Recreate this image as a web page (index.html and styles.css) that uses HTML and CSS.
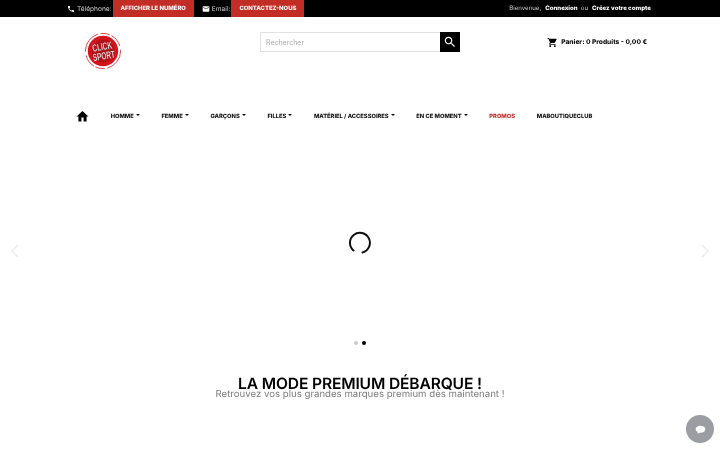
FILE: index.html
```html
<!DOCTYPE html>
<html lang="fr">
<head>
    <meta charset="UTF-8">
    <title>Click Sport</title>
    <link rel="stylesheet" href="styles.css">
</head>
<body>
    <!-- Top bar -->
    <div class="topbar">
        <div class="topbar-left">
            <svg class="top-icon" viewBox="0 0 24 24"><path d="M6.6 10.8c1.4 2.8 3.8 5.1 6.6 6.6l2.2-2.2c.3-.3.7-.4 1-.2 1.100.4 2.300.6 3.600.6.600 0 1 .4 1 1V20c0 .6-.4 1-1 1C10.600 21 3 13.400 3 4c0-.6.4-1 1-1h3.500c.6 0 1 .4 1 1 0 1.300.2 2.500.6 3.600.1.300 0 .7-.2 1z"/></svg>
            <span class="top-label">Téléphone:</span>
            <a class="top-btn">AFFICHER LE NUMÉRO</a>
            <svg class="top-icon mail-icon" viewBox="0 0 24 24"><path d="M20 4H4c-1.100 0-2 .9-2 2v12c0 1.100.9 2 2 2h16c1.100 0 2-.9 2-2V6c0-1.100-.9-2-2-2zm0 4l-8 5-8-5V6l8 5 8-5v2z"/></svg>
            <span class="top-label">Email:</span>
            <a class="top-btn">CONTACTEZ-NOUS</a>
        </div>
        <div class="topbar-right">
            <span>Bienvenue,</span>
            <b>Connexion</b>
            <span>ou</span>
            <b>Créez votre compte</b>
        </div>
    </div>

    <!-- Header -->
    <header class="header">
        <svg class="logo" viewBox="0 0 40 40">
            <circle cx="20" cy="20" r="18.500" fill="none" stroke="#d9232a" stroke-width="0.900" stroke-dasharray="24 3 10 2 14 4"/>
            <circle cx="20" cy="20" r="16" fill="#d3141d"/>
            <circle cx="20" cy="20" r="12" fill="#b50f18"/>
            <g class="logo-text" transform="rotate(-10 20 20) translate(20 0) scale(.62 1)">
                <text y="19">CLICK</text>
                <text y="29">SPORT</text>
            </g>
        </svg>
        <form class="search">
            <input class="search-input" type="text" placeholder="Rechercher">
            <button class="search-btn" type="button">
                <svg viewBox="0 0 24 24"><path d="M15.500 14h-.8l-.3-.3c1-1.100 1.600-2.600 1.600-4.200C16 5.900 13.100 3 9.500 3S3 5.900 3 9.500 5.900 16 9.500 16c1.600 0 3.100-.6 4.200-1.600l.3.3v.8l5 5 1.500-1.500-5-5zm-6 0C7 14 5 12 5 9.500S7 5 9.500 5 14 7 14 9.500 12 14 9.500 14z"/></svg>
            </button>
        </form>
        <div class="cart">
            <svg viewBox="0 0 24 24"><path d="M7 18c-1.100 0-2 .9-2 2s.9 2 2 2 2-.9 2-2-.9-2-2-2zM1 2v2h2l3.600 7.600L5.200 14c-.1.300-.2.600-.2 1 0 1.100.9 2 2 2h12v-2H7.400c-.1 0-.2-.1-.2-.2v-.1l.9-1.700h7.500c.7 0 1.400-.4 1.700-1l3.600-6.500c.1-.2.100-.3.100-.5 0-.6-.4-1-1-1H5.200l-.9-2H1zm16 16c-1.100 0-2 .9-2 2s.9 2 2 2 2-.9 2-2-.9-2-2-2z"/></svg>
            <span>Panier: 0 Produits - 0,00 €</span>
        </div>
    </header>

    <!-- Main menu -->
    <nav class="menu">
        <svg class="home-icon" viewBox="0 0 24 24"><path d="M10 21v-7h4v7h5.500v-9H23L12 2 1 12h3.500v9z"/></svg>
        <a class="menu-item caret">HOMME</a>
        <a class="menu-item caret">FEMME</a>
        <a class="menu-item caret">GARÇONS</a>
        <a class="menu-item caret">FILLES</a>
        <a class="menu-item caret">MATÉRIEL / ACCESSOIRES</a>
        <a class="menu-item caret">EN CE MOMENT</a>
        <a class="menu-item promo">PROMOS</a>
        <a class="menu-item">MABOUTIQUECLUB</a>
    </nav>

    <!-- Slider, still loading -->
    <section class="slider">
        <svg class="slider-arrow arrow-left" viewBox="0 0 10 14"><path d="M8 1L2 7l6 6"/></svg>
        <svg class="spinner" viewBox="0 0 24 24"><path d="M15.500 21.500A10 10 0 1 0 6.500 19.500"/></svg>
        <svg class="slider-arrow arrow-right" viewBox="0 0 10 14"><path d="M2 1l6 6-6 6"/></svg>
        <div class="dots">
            <span class="dot"></span>
            <span class="dot active"></span>
        </div>
    </section>

    <section class="promo-title">
        <h2>LA MODE PREMIUM DÉBARQUE !</h2>
        <p>Retrouvez vos plus grandes marques premium dès maintenant !</p>
    </section>

    <!-- Chat widget -->
    <div class="chat">
        <svg viewBox="0 0 24 24"><path d="M12 5c5 0 9 2.800 9 6.500S17 18 12 18c-.7 0-1.400 0-2-.2L6.500 20l.6-3.300C4.600 15.500 3 13.600 3 11.500 3 7.800 7 5 12 5z"/></svg>
    </div>
</body>
</html>
```

FILE: styles.css
```css
* { margin: 0; padding: 0; box-sizing: border-box; }
html, body { height: 450px; overflow: hidden; }
body { font-family: Inter, "Liberation Sans", sans-serif; background: #fff; color: #000; text-rendering: geometricPrecision; }
.topbar, .header, .menu, .promo-title { will-change: transform; }

.topbar {
    height: 17px; background: #000; color: #ccc;
    display: flex; justify-content: space-between; align-items: center;
    padding: 0 69px 0 67px; font-size: 6.600px;
}
.topbar-left { display: flex; align-items: center; height: 100%; }
.top-icon { width: 8px; height: 8px; fill: #fff; margin-right: 2px; }
.mail-icon { margin-left: 8px; }
.top-label { margin-right: 1px; }
.top-btn {
    height: 100%; background: #c22d26; color: #fff;
    font-weight: 800; font-size: 5.900px;
    display: flex; align-items: center; padding: 0 8px;
}
.topbar-right { display: flex; gap: 3px; font-size: 6.100px; }
.topbar-right span { margin-right: 1px; }
.topbar-right b { color: #fff; font-weight: 800; }

.header {
    height: 79px; display: flex; align-items: flex-start;
    padding: 15px 73px 0 84px;
}
.logo { width: 38px; height: 38px; }
.logo-text text {
    font-family: "Liberation Sans", sans-serif; font-weight: 700; font-size: 11px;
    fill: #fff; text-anchor: middle; stroke: #600; stroke-width: 0.300;
}
.search { display: flex; width: 200px; height: 20px; margin: 0 0 0 138px; }
.search-input {
    flex: 1; min-width: 0; border: 1px solid #e2e2e2; border-right: 0;
    padding: 0 5px; font-family: inherit; font-size: 7px; outline: none;
}
.search-input::placeholder { color: #aaa; }
.search-btn { width: 20px; background: #000; border: none; display: flex; align-items: center; justify-content: center; }
.search-btn svg { width: 14px; height: 14px; fill: #fff; }
.cart {
    margin-left: auto; height: 20px; display: flex; align-items: center; gap: 3px;
    font-weight: 800; font-size: 6.600px; color: #111;
}
.cart svg { width: 11px; height: 11px; }

.menu { height: 40px; display: flex; align-items: center; gap: 21.700px; padding-left: 76px; }
.home-icon { width: 13px; height: 13px; margin-right: 0; }
.menu-item { font-weight: 800; font-size: 5.750px; color: #111; white-space: nowrap; }
.menu-item.promo { color: #c22d26; }
.caret::after {
    content: ""; display: inline-block; margin-left: 2px; vertical-align: 1.500px;
    border-top: 2px solid #111; border-left: 2px solid transparent; border-right: 2px solid transparent;
}

.slider { position: relative; height: 214px; }
.spinner {
    position: absolute; left: 347px; top: 95px; width: 24px; height: 24px;
    fill: none; stroke: #111; stroke-width: 2; stroke-linecap: round;
}
.slider-arrow {
    position: absolute; top: 108px; width: 10px; height: 14px;
    fill: none; stroke: #ececec; stroke-width: 1.500;
}
.arrow-left { left: 10px; }
.arrow-right { right: 10px; }
.dots { position: absolute; left: 354px; top: 205px; display: flex; gap: 4px; }
.dot { width: 4px; height: 4px; border-radius: 50%; background: #ccc; }
.dot.active { background: #000; }

.promo-title { text-align: center; margin-top: 27px; }
.promo-title h2 { font-size: 15.600px; font-weight: 600; line-height: 13px; letter-spacing: -0.150px; }
.promo-title p { font-size: 9.650px; line-height: 10px; color: #7d7d7d; }

.chat {
    position: fixed; right: 6px; bottom: 7px; width: 28px; height: 28px; border-radius: 50%;
    background: #9a9ea3; display: flex; align-items: center; justify-content: center;
}
.chat svg { width: 13px; height: 13px; fill: #fff; }
```
